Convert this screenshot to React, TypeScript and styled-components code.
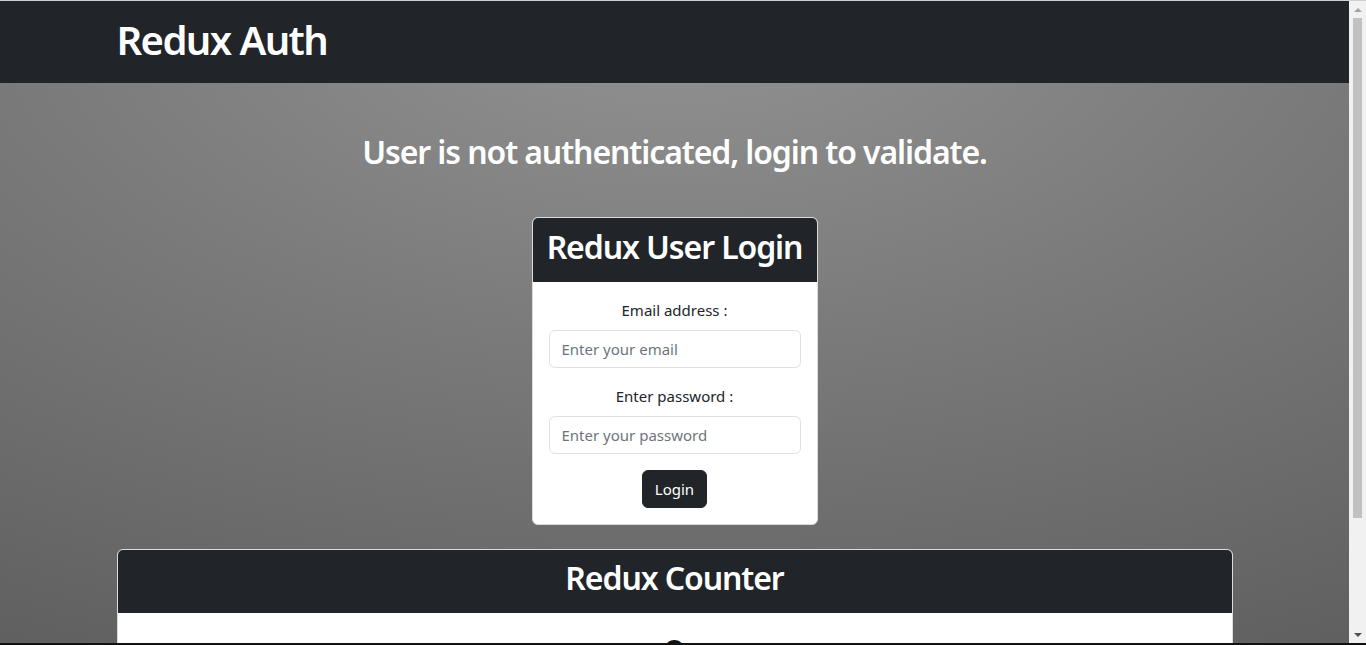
import React from "react";
import styled, { createGlobalStyle } from "styled-components";

const GlobalStyle = createGlobalStyle`
  html, body {
    margin: 0;
    padding: 0;
    overflow: hidden;
    background: #1b1b1b;
  }
  body {
    font-family: "Noto Sans", "Open Sans", "Liberation Sans", sans-serif;
    color: #212529;
  }
  * { box-sizing: border-box; }
`;

const Frame = styled.div`
  width: 1366px;
  height: 645px;
  display: flex;
  flex-direction: column;
  overflow: hidden;
`;

const TopEdge = styled.div`
  height: 1px;
  flex: none;
  background: #cfd0d2;
`;

const BottomEdge = styled.div`
  height: 2px;
  flex: none;
  background: #111;
`;

const Window = styled.div`
  flex: 1;
  display: flex;
  min-height: 0;
`;

const Page = styled.div`
  flex: 1;
  display: flex;
  flex-direction: column;
  overflow: hidden;
  background: radial-gradient(ellipse 110% 120% at 50% 0%, #939393 0%, #7a7a7a 45%, #5d5d5d 100%);
`;

const Navbar = styled.header`
  flex: none;
  height: 82px;
  background: #212529;
  display: flex;
  align-items: center;
`;

const Container = styled.div`
  width: 1140px;
  margin: 0 auto;
  padding: 0 12px;
`;

const Brand = styled.h1`
  margin: 0;
  font-size: 40px;
  font-weight: 600;
  line-height: 48px;
  color: #fff;
  letter-spacing: -1.6px;
  padding-bottom: 5px;
`;

const Main = styled(Container)`
  display: flex;
  flex-direction: column;
  align-items: center;
  padding-top: 49px;
`;

const Status = styled.h2`
  margin: 0;
  font-size: 32px;
  font-weight: 600;
  line-height: 40px;
  color: #fff;
  letter-spacing: -1.1px;
  text-align: center;
`;

const Card = styled.section<{ $width?: string }>`
  width: ${(p) => p.$width || "100%"};
  background: #fff;
  border: 1px solid #d9dbdd;
  border-radius: 6px;
  overflow: hidden;
  display: flex;
  flex-direction: column;
`;

const LoginCard = styled(Card)`
  margin-top: 45px;
`;

const CounterCard = styled(Card)`
  margin-top: 24px;
`;

const CardHeader = styled.div<{ $height: number }>`
  height: ${(p) => p.$height}px;
  background: #212529;
  display: flex;
  align-items: center;
  justify-content: center;
  padding-bottom: 7px;
`;

const CardTitle = styled.h2`
  margin: 0;
  font-size: 32px;
  font-weight: 600;
  line-height: 40px;
  color: #fff;
  letter-spacing: -1.1px;
  white-space: nowrap;
`;

const Form = styled.form`
  display: flex;
  flex-direction: column;
  align-items: stretch;
  padding: 16px 16px 16px;
`;

const Label = styled.label`
  display: block;
  text-align: center;
  font-size: 15px;
  line-height: 24px;
  color: #212529;
  margin-bottom: 8px;
`;

const Input = styled.input`
  display: block;
  width: 100%;
  height: 38px;
  padding: 6px 12px;
  font-family: inherit;
  font-size: 15px;
  color: #212529;
  background: #fff;
  border: 1px solid #dee2e6;
  border-radius: 6px;
  outline: none;
  margin-bottom: 16px;
  &::placeholder {
    color: #6c757d;
  }
`;

const Button = styled.button`
  align-self: center;
  height: 38px;
  padding: 0 12px;
  font-family: inherit;
  font-size: 15px;
  color: #fff;
  background: #212529;
  border: 1px solid #212529;
  border-radius: 6px;
  cursor: pointer;
`;

const CounterBody = styled.div`
  padding: 16px;
  display: flex;
  flex-direction: column;
  align-items: center;
`;

const CounterValue = styled.div`
  font-size: 40px;
  font-weight: 700;
  line-height: 48px;
  color: #111;
`;

const Scrollbar = styled.div`
  width: 17px;
  flex: none;
  background: #f1f1f1;
  display: flex;
  flex-direction: column;
  align-items: center;
`;

const Arrow = styled.div<{ $down?: boolean }>`
  height: 17px;
  width: 17px;
  flex: none;
  display: flex;
  align-items: center;
  justify-content: center;
  &::before {
    content: "";
    width: 0;
    height: 0;
    border-left: 4px solid transparent;
    border-right: 4px solid transparent;
    ${(p) =>
      p.$down ? "border-top: 4px solid #505050;" : "border-bottom: 4px solid #a3a3a3;"}
  }
`;

const Thumb = styled.div`
  width: 9px;
  height: 500px;
  background: #c1c1c1;
  flex: none;
`;

const Track = styled.div`
  flex: 1;
`;

export default function App() {
  return (
    <>
      <GlobalStyle />
      <Frame>
        <TopEdge />
        <Window>
          <Page>
            <Navbar>
              <Container>
                <Brand>Redux Auth</Brand>
              </Container>
            </Navbar>
            <Main>
              <Status>User is not authenticated, login to validate.</Status>
              <LoginCard $width="286px">
                <CardHeader $height={64}>
                  <CardTitle>Redux User Login</CardTitle>
                </CardHeader>
                <Form onSubmit={(e) => e.preventDefault()}>
                  <Label htmlFor="email">Email address :</Label>
                  <Input id="email" type="email" placeholder="Enter your email" />
                  <Label htmlFor="password">Enter password :</Label>
                  <Input id="password" type="password" placeholder="Enter your password" />
                  <Button type="submit">Login</Button>
                </Form>
              </LoginCard>
              <CounterCard>
                <CardHeader $height={63}>
                  <CardTitle>Redux Counter</CardTitle>
                </CardHeader>
                <CounterBody>
                  <CounterValue>0</CounterValue>
                </CounterBody>
              </CounterCard>
            </Main>
          </Page>
          <Scrollbar>
            <Arrow />
            <Thumb />
            <Track />
            <Arrow $down />
          </Scrollbar>
        </Window>
        <BottomEdge />
      </Frame>
    </>
  );
}
